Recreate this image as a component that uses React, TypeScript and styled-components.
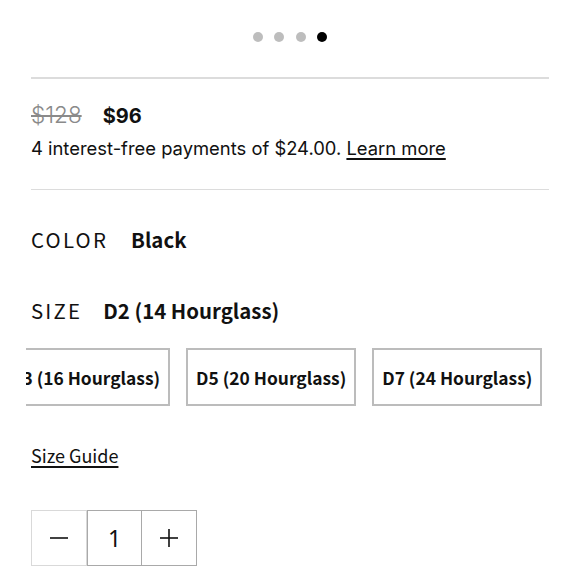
import React, { useLayoutEffect, useRef } from "react";
import styled, { createGlobalStyle } from "styled-components";

const Global = createGlobalStyle`
  html, body { margin: 0; padding: 0; background: #fff; }
  body { font-family: Inter, "Noto Sans", sans-serif; color: #111; }
  * { box-sizing: border-box; }
`;

const Page = styled.div`
  width: 580px;
  height: 580px;
  overflow: hidden;
  display: flex;
  flex-direction: column;
`;

const Dots = styled.div`
  display: flex;
  justify-content: center;
  gap: 11.5px;
  padding-top: 32px;
  height: 77px;
`;

const Dot = styled.span<{ $active?: boolean }>`
  width: 10px;
  height: 10px;
  border-radius: 50%;
  background: ${(p) => (p.$active ? "#000" : "#bdbdbd")};
`;

const Section = styled.div`
  padding: 0 31px;
  display: flex;
  flex-direction: column;
  align-items: flex-start;
`;

const Rule = styled.hr`
  border: none;
  align-self: stretch;
  height: 1.5px;
  background: #dcdcdc;
  margin: 0;
`;

const PriceRow = styled.div`
  display: flex;
  align-items: baseline;
  gap: 21px;
  margin-top: 24px;
  line-height: 24px;
`;

const OldPrice = styled.span`
  color: #8a8a8a;
  font-size: 22.5px;
  font-weight: 300;
  text-decoration: line-through;
  text-decoration-thickness: 1.5px;
`;

const NewPrice = styled.span`
  font-size: 20px;
  font-weight: 700;
`;

const Installments = styled.div`
  margin-top: 9px;
  font-size: 18.4px;
  line-height: 22px;
  margin-bottom: 30px;
`;

const Underlined = styled.a`
  color: #111;
  text-decoration: underline;
  text-underline-offset: 3px;
  text-decoration-thickness: 1.5px;
`;

const OptionRow = styled.div<{ $gap: number; $top: number }>`
  display: flex;
  align-items: baseline;
  gap: ${(p) => p.$gap}px;
  margin-top: ${(p) => p.$top}px;
  font-family: "Noto Sans CJK JP", "Noto Sans", sans-serif;
  font-size: 20.4px;
  line-height: 24px;
`;

const OptionLabel = styled.span`
  letter-spacing: 2.2px;
  font-weight: 400;
`;

const OptionValue = styled.span`
  font-weight: 700;
`;

const Scroller = styled.div`
  position: relative;
  margin: 26px 0 0 26px;
  overflow-x: auto;
  scrollbar-width: none;
  &::-webkit-scrollbar { display: none; }
`;

const SizeTrack = styled.div`
  display: flex;
  gap: 16px;
  width: max-content;
  padding-right: 40px;
`;

const SizeButton = styled.button`
  height: 58px;
  padding: 0 8px;
  border: 2px solid #bcbcbc;
  background: #fff;
  color: #111;
  font-family: "Noto Sans CJK JP", "Noto Sans", sans-serif;
  font-weight: 700;
  font-size: 17.4px;
  white-space: nowrap;
`;

const GuideLink = styled(Underlined)`
  margin-top: 38px;
  font-family: "Noto Sans CJK JP", "Noto Sans", sans-serif;
  font-size: 18px;
  line-height: 22px;
`;

const Stepper = styled.div`
  display: flex;
  margin-top: 44px;
  height: 56px;
`;

const StepCell = styled.div<{ $tone: "light" | "dark"; $first?: boolean }>`
  width: ${(p) => (p.$first ? 56 : 55)}px;
  display: flex;
  align-items: center;
  justify-content: center;
  border: 1.5px solid ${(p) => (p.$tone === "light" ? "#d9d9d9" : "#a9a9a9")};
  border-left-width: ${(p) => (p.$first ? 1.5 : 0)}px;
  font-family: "Noto Sans", sans-serif;
  font-size: 23px;
  font-weight: 400;
  color: #111;
`;

const sizes = [
  "D3 (16 Hourglass)",
  "D5 (20 Hourglass)",
  "D7 (24 Hourglass)",
];

const Minus = () => (
  <svg width="20" height="20" viewBox="0 0 20 20">
    <line x1="1" y1="10" x2="19" y2="10" stroke="#111" strokeWidth="1.6" />
  </svg>
);

const Plus = () => (
  <svg width="20" height="20" viewBox="0 0 20 20">
    <line x1="1" y1="10" x2="19" y2="10" stroke="#111" strokeWidth="1.6" />
    <line x1="10" y1="1" x2="10" y2="19" stroke="#111" strokeWidth="1.6" />
  </svg>
);

export default function App() {
  const scrollRef = useRef<HTMLDivElement>(null);
  const secondRef = useRef<HTMLButtonElement>(null);

  useLayoutEffect(() => {
    const s = scrollRef.current;
    const b = secondRef.current;
    if (s && b) s.scrollLeft = b.offsetLeft - (186 - 26);
  }, []);

  return (
    <Page>
      <Global />
      <Dots>
        <Dot />
        <Dot />
        <Dot />
        <Dot $active />
      </Dots>
      <Section>
        <Rule />
        <PriceRow>
          <OldPrice>$128</OldPrice>
          <NewPrice>$96</NewPrice>
        </PriceRow>
        <Installments>
          4 interest-free payments of $24.00. <Underlined href="#">Learn more</Underlined>
        </Installments>
        <Rule />
        <OptionRow $gap={23} $top={37}>
          <OptionLabel>COLOR</OptionLabel>
          <OptionValue>Black</OptionValue>
        </OptionRow>
        <OptionRow $gap={21} $top={47}>
          <OptionLabel>SIZE</OptionLabel>
          <OptionValue>D2 (14 Hourglass)</OptionValue>
        </OptionRow>
      </Section>
      <Scroller ref={scrollRef}>
        <SizeTrack>
          {sizes.map((s, i) => (
            <SizeButton key={s} ref={i === 1 ? secondRef : undefined}>
              {s}
            </SizeButton>
          ))}
        </SizeTrack>
      </Scroller>
      <Section>
        <GuideLink href="#">Size Guide</GuideLink>
        <Stepper>
          <StepCell $tone="light" $first><Minus /></StepCell>
          <StepCell $tone="dark" style={{ borderLeftWidth: 1.5 }}>1</StepCell>
          <StepCell $tone="dark"><Plus /></StepCell>
        </Stepper>
      </Section>
    </Page>
  );
}
